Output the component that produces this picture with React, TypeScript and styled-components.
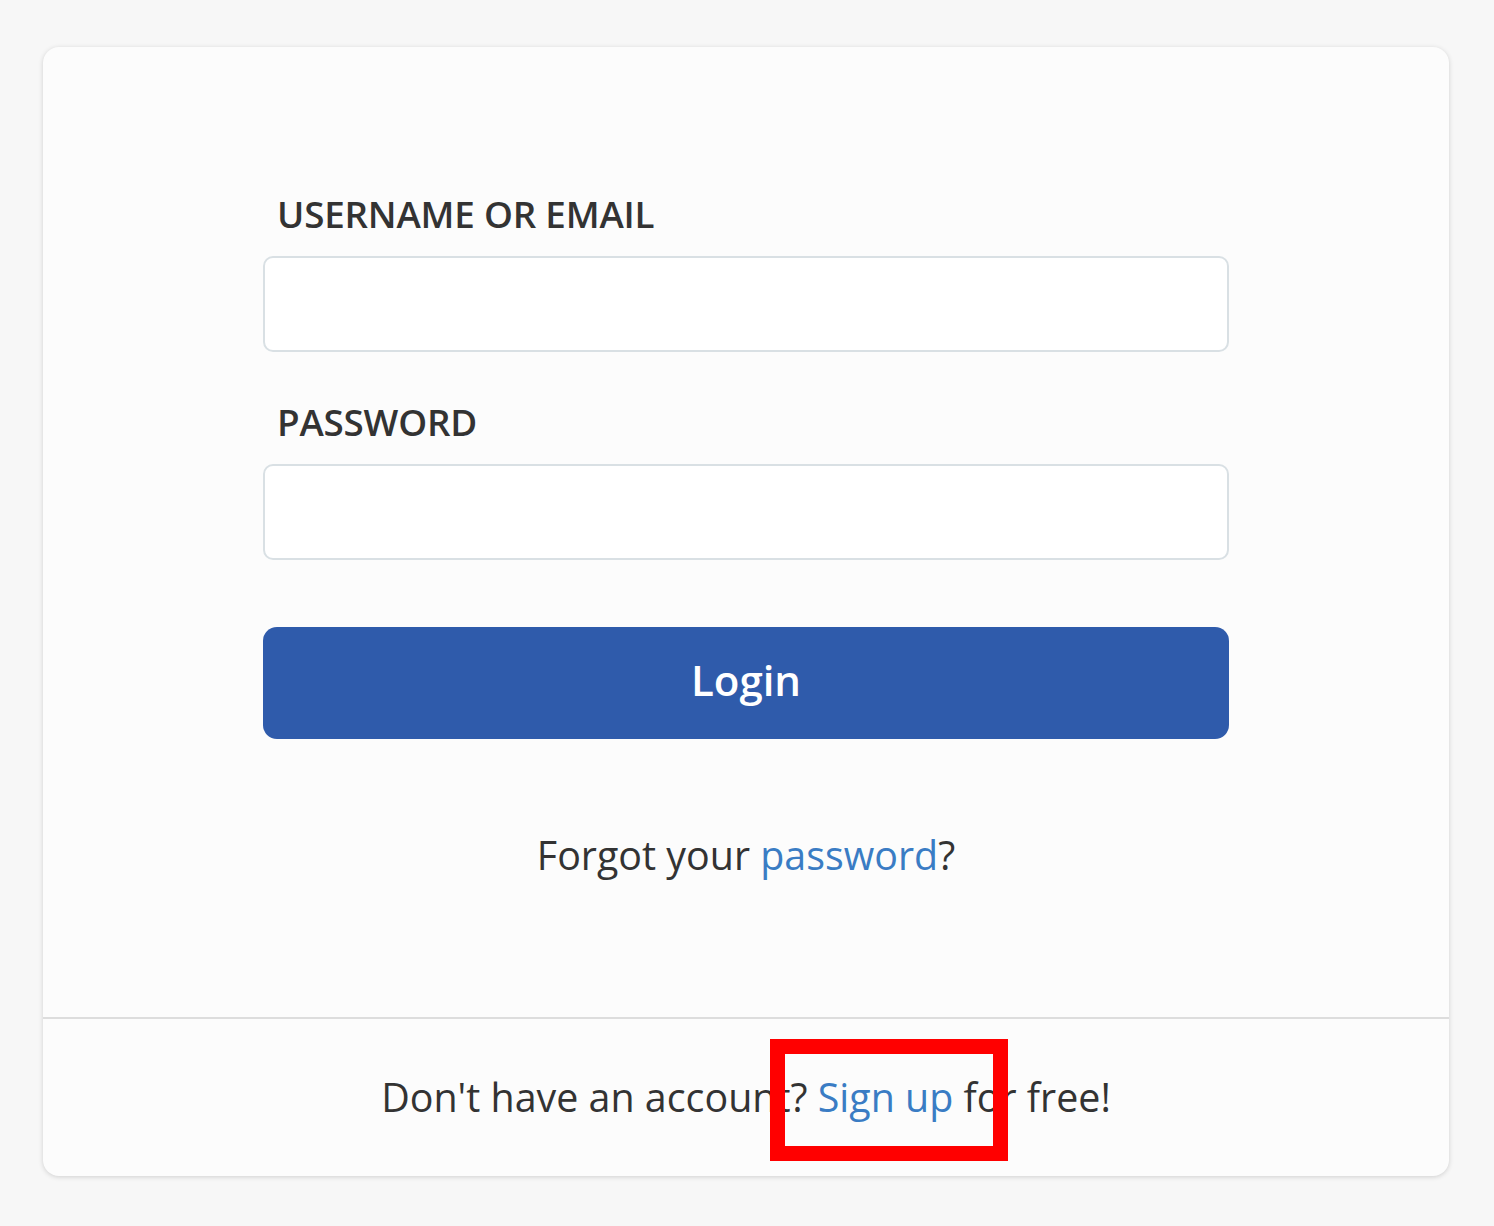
import React from "react";
import styled, { createGlobalStyle } from "styled-components";

const GlobalStyle = createGlobalStyle`
  html, body {
    margin: 0;
    padding: 0;
    background: #f7f7f7;
    font-family: "Open Sans", "Noto Sans", Arial, sans-serif;
    color: #333333;
  }
  * { box-sizing: border-box; }
`;

const Page = styled.div`
  padding: 47px 45px 50px 43px;
`;

const Card = styled.div`
  background: #fcfcfc;
  border-radius: 16px;
  box-shadow: 0 1px 5px rgba(0, 0, 0, 0.16);
  overflow: hidden;
`;

const Body = styled.form`
  padding: 145px 0 132px;
  display: flex;
  flex-direction: column;
  align-items: center;
`;

const Fields = styled.div`
  width: 966px;
  display: flex;
  flex-direction: column;
`;

const Field = styled.div<{ $last?: boolean }>`
  display: flex;
  flex-direction: column;
  margin-bottom: ${(p) => (p.$last ? "67px" : "48px")};
`;

const Label = styled.label`
  font-size: 36.8px;
  line-height: 44px;
  font-weight: 600;
  color: #333333;
  padding-left: 14px;
  margin-bottom: 20px;
  letter-spacing: -0.2px;
`;

const Input = styled.input`
  height: 96px;
  width: 100%;
  background: #ffffff;
  border: 2px solid #d9e0e4;
  border-radius: 10px;
  font-family: inherit;
  font-size: 36px;
  padding: 0 20px;
  outline: none;
`;

const LoginButton = styled.button`
  height: 112px;
  width: 100%;
  border: none;
  border-radius: 14px;
  background: #2f5bab;
  color: #ffffff;
  font-family: "Open Sans", "Noto Sans", Arial, sans-serif;
  font-size: 42px;
  font-weight: 600;
  padding: 0 0 7px;
  cursor: pointer;
`;

const Line = styled.p`
  margin: 0;
  font-size: 39.4px;
  line-height: 60px;
  color: #333333;
  text-align: center;
`;

const Forgot = styled(Line)`
  margin-top: 86px;
`;

const Link = styled.a`
  color: #3a7cc4;
  text-decoration: none;
`;

const Footer = styled.div`
  position: relative;
  border-top: 2px solid #dddddd;
  padding: 48px 0 49px;
`;

const Highlight = styled.div`
  position: absolute;
  top: 20px;
  left: 727px;
  width: 238px;
  height: 122px;
  border: 15px solid #ff0000;
  pointer-events: none;
`;

export default function App() {
  return (
    <>
      <GlobalStyle />
      <Page>
        <Card>
          <Body onSubmit={(e) => e.preventDefault()}>
            <Fields>
              <Field>
                <Label htmlFor="user">USERNAME OR EMAIL</Label>
                <Input id="user" type="text" />
              </Field>
              <Field $last>
                <Label htmlFor="pass">PASSWORD</Label>
                <Input id="pass" type="password" />
              </Field>
              <LoginButton type="submit">Login</LoginButton>
            </Fields>
            <Forgot>
              Forgot your <Link href="#">password</Link>?
            </Forgot>
          </Body>
          <Footer>
            <Line>
              Don't have an account? <Link href="#">Sign up</Link> for free!
            </Line>
            <Highlight />
          </Footer>
        </Card>
      </Page>
    </>
  );
}
